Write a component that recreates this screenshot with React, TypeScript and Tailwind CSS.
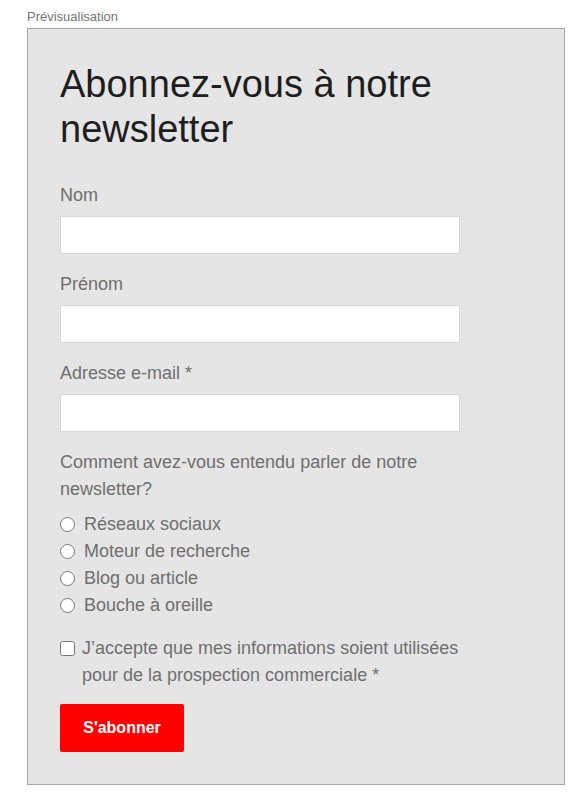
export default function App() {
  const sources = ["Réseaux sociaux", "Moteur de recherche", "Blog ou article", "Bouche à oreille"];
  const fields = ["Nom", "Prénom", "Adresse e-mail *"];

  return (
    <div className="min-h-screen bg-white" style={{ fontFamily: "'Liberation Sans', Arial, sans-serif" }}>
      <div className="pl-[27px] pt-[8px]">
        <p className="text-[13px] leading-[18px] text-[#757575] mb-[2px]">Prévisualisation</p>

        <div className="w-[538px] border border-[#a7a7a7] bg-[#e5e5e5] pl-[32px] pt-[33px] pb-[32px]">
          <h1 className="text-[38px] leading-[45px] text-[#1e1e1e] font-normal">
            Abonnez-vous à notre newsletter
          </h1>

          <form className="mt-[30px] w-[400px]" onSubmit={(e) => e.preventDefault()}>
            {fields.map((label) => (
              <div key={label} className="mb-[17px]">
                <label className="block text-[18px] leading-[27px] text-[#6f6f6f] mb-[7px]">{label}</label>
                <input
                  type="text"
                  className="block w-full h-[38px] bg-white border border-[#d6d6d6] outline-none"
                />
              </div>
            ))}

            <p className="text-[18px] leading-[27px] text-[#6f6f6f]">
              Comment avez-vous entendu parler de notre newsletter?
            </p>

            <div className="mt-[8px]">
              {sources.map((s) => (
                <label key={s} className="flex items-center text-[18px] leading-[27px] text-[#6f6f6f]">
                  <input type="radio" name="source" className="w-[15px] h-[15px] ml-0 mr-[9px]" />
                  {s}
                </label>
              ))}
            </div>

            <label className="flex items-start mt-[16px] text-[18px] leading-[27px] text-[#6f6f6f]">
              <input type="checkbox" className="w-[15px] h-[15px] ml-0 mt-[6px] mr-[7px] shrink-0" />
              <span>J’accepte que mes informations soient utilisées pour de la prospection commerciale *</span>
            </label>

            <button
              type="submit"
              className="mt-[15px] h-[48px] w-[124px] bg-[#ff0000] text-white font-bold text-[16px] rounded-[2px]"
            >
              S'abonner
            </button>
          </form>
        </div>
      </div>
    </div>
  );
}
